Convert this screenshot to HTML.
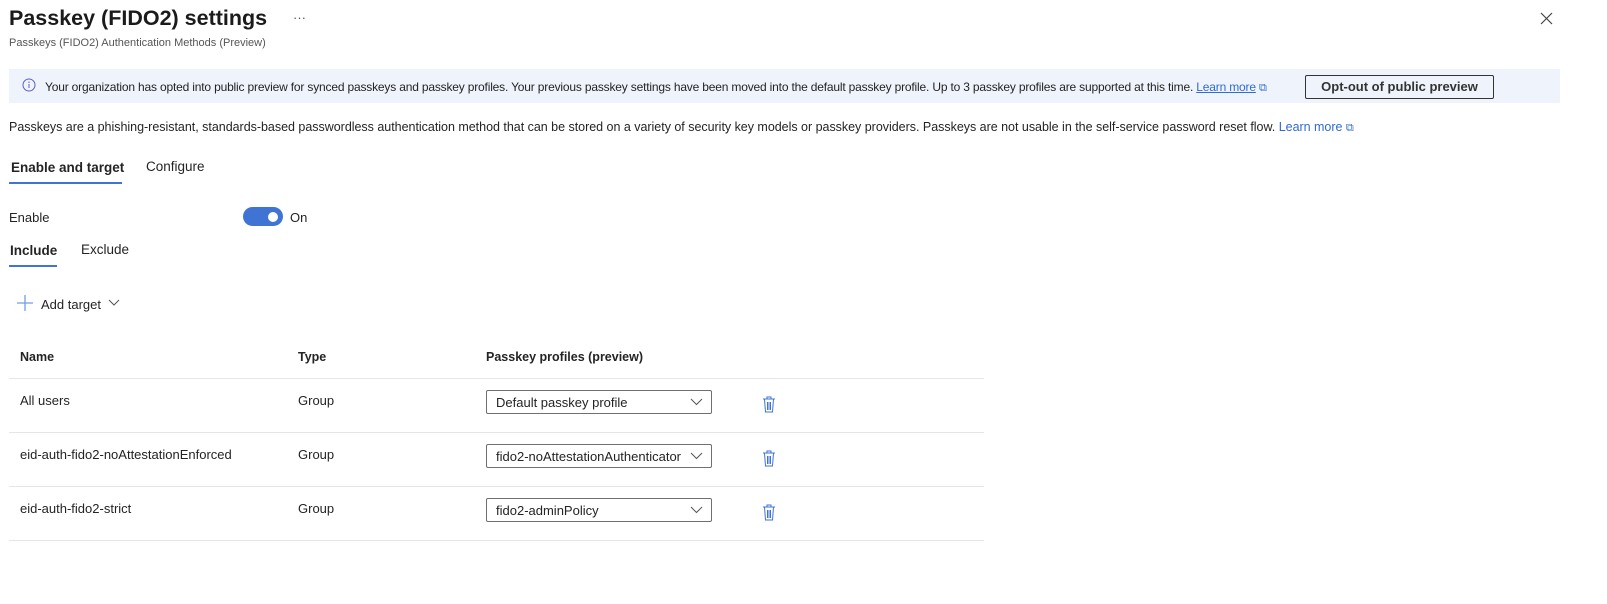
<!DOCTYPE html>
<html><head><meta charset="utf-8"><style>
*{margin:0;padding:0;box-sizing:border-box}
body{width:1607px;height:604px;background:#fff;font-family:"Liberation Sans",sans-serif;color:#242424;position:relative;overflow:hidden;font-size:13px}
.a{position:absolute;white-space:nowrap}
a{color:#2f6bd0;text-decoration:none}
.sel{position:absolute;left:486px;width:226px;height:24px;border:1px solid #707070;border-radius:2px;font-size:13px;padding:4px 9px;white-space:nowrap}
.sel svg{position:absolute;right:8px;top:7px}
.hr{position:absolute;left:9px;width:975px;height:1px;background:#e6e6e6}
.trash{position:absolute;left:762px}
</style></head><body>
<div class="a" style="left:9px;top:6px;font-size:21.5px;font-weight:bold;color:#1b1b1b">Passkey (FIDO2) settings</div>
<div class="a" style="left:293px;top:10px;font-size:13px;color:#555">···</div>
<div class="a" style="left:9px;top:37px;font-size:11px;color:#555">Passkeys (FIDO2) Authentication Methods (Preview)</div>
<svg class="a" style="left:1540px;top:12px" width="13" height="13" viewBox="0 0 13 13"><path d="M1 1L12 12M12 1L1 12" stroke="#444" stroke-width="1.2"/></svg>
<div class="a" style="left:9px;top:69px;width:1551px;height:34px;background:#eff4fc"></div>
<svg class="a" style="left:22px;top:78px" width="14" height="14" viewBox="0 0 14 14"><circle cx="7" cy="7" r="6" fill="none" stroke="#5b5fc7" stroke-width="1"/><path d="M7 6v4" stroke="#5b5fc7"/><circle cx="7" cy="4.2" r=".7" fill="#5b5fc7"/></svg>
<div class="a" style="left:45px;top:80px;font-size:12px;letter-spacing:-0.18px">Your organization has opted into public preview for synced passkeys and passkey profiles. Your previous passkey settings have been moved into the default passkey profile. Up to 3 passkey profiles are supported at this time. <a style="text-decoration:underline">Learn more</a> <span style="color:#2f6bd0;font-size:11px">⧉</span></div>
<div class="a" style="left:1305px;top:75px;width:189px;height:24px;border:1px solid #333;border-radius:2px;text-align:center;font-size:13px;font-weight:bold;line-height:22px;color:#333">Opt-out of public preview</div>
<div class="a" style="left:9px;top:120px;font-size:12.5px;letter-spacing:-0.02px">Passkeys are a phishing-resistant, standards-based passwordless authentication method that can be stored on a variety of security key models or passkey providers. Passkeys are not usable in the self-service password reset flow. <a>Learn more</a> <span style="color:#2f6bd0;font-size:11px">⧉</span></div>
<div class="a" style="left:11px;top:160px;font-size:13.5px;font-weight:bold">Enable and target</div>
<div class="a" style="left:9px;top:182px;width:113px;height:2px;background:#3f74d4"></div>
<div class="a" style="left:146px;top:159px;font-size:13.5px">Configure</div>
<div class="a" style="left:9px;top:210px;font-size:13px">Enable</div>
<div class="a" style="left:243px;top:207px;width:40px;height:19px;border-radius:10px;background:#3f74d4"></div>
<div class="a" style="left:268px;top:212px;width:10px;height:10px;border-radius:5px;background:#fff"></div>
<div class="a" style="left:290px;top:210px;font-size:13px">On</div>
<div class="a" style="left:10px;top:243px;font-size:13.5px;font-weight:bold">Include</div>
<div class="a" style="left:9px;top:265px;width:48px;height:2px;background:#3f74d4"></div>
<div class="a" style="left:81px;top:242px;font-size:13.5px">Exclude</div>
<svg class="a" style="left:17px;top:295px" width="16" height="16" viewBox="0 0 16 16"><path d="M8 0v16M0 8h16" stroke="#6e9fe3" stroke-width="1.3"/></svg>
<div class="a" style="left:41px;top:297px;font-size:13px">Add target</div>
<svg class="a" style="left:108px;top:299px" width="12" height="7" viewBox="0 0 12 7"><path d="M1 1l5 5 5-5" fill="none" stroke="#555"/></svg>
<div class="a" style="left:20px;top:350px;font-weight:bold;font-size:12.5px">Name</div>
<div class="a" style="left:298px;top:350px;font-weight:bold;font-size:12.5px">Type</div>
<div class="a" style="left:486px;top:350px;font-weight:bold;font-size:12.5px">Passkey profiles (preview)</div>
<div class="hr" style="top:378px"></div>
<div class="a" style="left:20px;top:393px">All users</div><div class="a" style="left:298px;top:393px">Group</div>
<div class="sel" style="top:390px">Default passkey profile<svg width="13" height="8"><path d="M1 1l5.5 5.5L12 1" fill="none" stroke="#555"/></svg></div>
<div class="hr" style="top:432px"></div>
<div class="a" style="left:20px;top:447px">eid-auth-fido2-noAttestationEnforced</div><div class="a" style="left:298px;top:447px">Group</div>
<div class="sel" style="top:444px">fido2-noAttestationAuthenticator<svg width="13" height="8"><path d="M1 1l5.5 5.5L12 1" fill="none" stroke="#555"/></svg></div>
<div class="hr" style="top:486px"></div>
<div class="a" style="left:20px;top:501px">eid-auth-fido2-strict</div><div class="a" style="left:298px;top:501px">Group</div>
<div class="sel" style="top:498px">fido2-adminPolicy<svg width="13" height="8"><path d="M1 1l5.5 5.5L12 1" fill="none" stroke="#555"/></svg></div>
<div class="hr" style="top:540px"></div>
<svg class="trash" style="top:396px" width="14" height="17" viewBox="0 0 14 17"><path d="M1 3h12M5 3V1h4v2M2.5 3l1 13h7l1-13M5.5 6v8M7 6v8M8.5 6v8" fill="none" stroke="#3f74d4"/></svg>
<svg class="trash" style="top:450px" width="14" height="17" viewBox="0 0 14 17"><path d="M1 3h12M5 3V1h4v2M2.5 3l1 13h7l1-13M5.5 6v8M7 6v8M8.5 6v8" fill="none" stroke="#3f74d4"/></svg>
<svg class="trash" style="top:504px" width="14" height="17" viewBox="0 0 14 17"><path d="M1 3h12M5 3V1h4v2M2.5 3l1 13h7l1-13M5.5 6v8M7 6v8M8.5 6v8" fill="none" stroke="#3f74d4"/></svg>
</body></html>
